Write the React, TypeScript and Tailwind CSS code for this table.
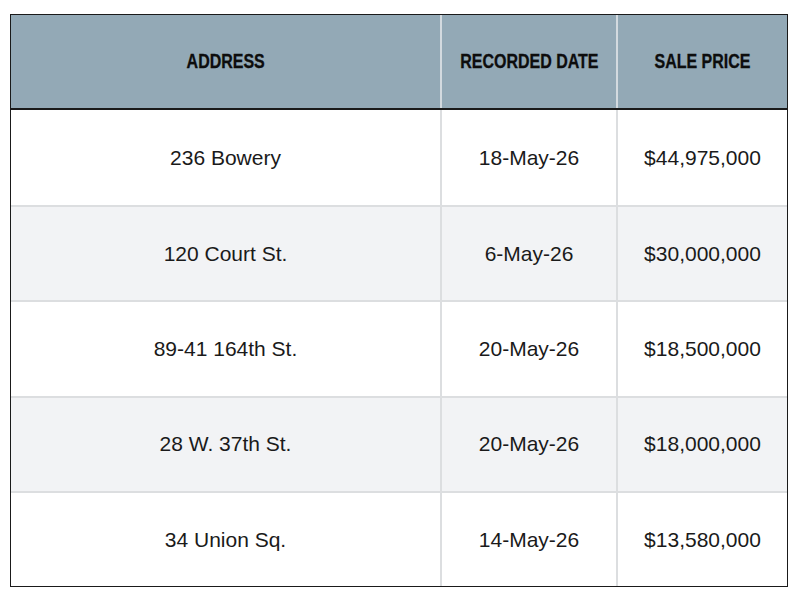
import clsx from "clsx";

const ROWS = [
  { address: "236 Bowery", date: "18-May-26", price: "$44,975,000" },
  { address: "120 Court St.", date: "6-May-26", price: "$30,000,000" },
  { address: "89-41 164th St.", date: "20-May-26", price: "$18,500,000" },
  { address: "28 W. 37th St.", date: "20-May-26", price: "$18,000,000" },
  { address: "34 Union Sq.", date: "14-May-26", price: "$13,580,000" },
];

const COLS = "grid grid-cols-[429px_176px_171px]";

export default function App() {
  return (
    <div className="w-[800px] h-[600px] bg-white pt-[14px] pl-[10px]">
      <div className="w-[778px] border border-[#1a1a1a] font-['Liberation_Sans',Arial,sans-serif] text-[#1a1a1a]">
        {/* header */}
        <div className={clsx(COLS, "h-[95px] bg-[#93a9b6] border-b-2 border-[#1a1a1a]")}>
          {["ADDRESS", "RECORDED DATE", "SALE PRICE"].map((h, i) => (
            <div
              key={h}
              className={clsx(
                "flex items-center justify-center pt-[1px]",
                i > 0 && "border-l-2 border-[#d3dadf]"
              )}
            >
              <span className="inline-block whitespace-nowrap scale-x-[0.82] font-bold text-[19.5px] text-[#0d0d0d] [-webkit-text-stroke:0.3px_#0d0d0d]">
                {h}
              </span>
            </div>
          ))}
        </div>

        {/* body */}
        {ROWS.map((r, i) => (
          <div
            key={r.address}
            className={clsx(
              COLS,
              "h-[95.2px] text-[21px]",
              i % 2 === 1 ? "bg-[#f2f3f5]" : "bg-white",
              i > 0 && "border-t-2 border-[#dcdee0]"
            )}
          >
            <div className="flex items-center justify-center">{r.address}</div>
            <div className="flex items-center justify-center border-l-2 border-[#dcdee0]">{r.date}</div>
            <div className="flex items-center justify-center border-l-2 border-[#dcdee0]">{r.price}</div>
          </div>
        ))}
      </div>
    </div>
  );
}
